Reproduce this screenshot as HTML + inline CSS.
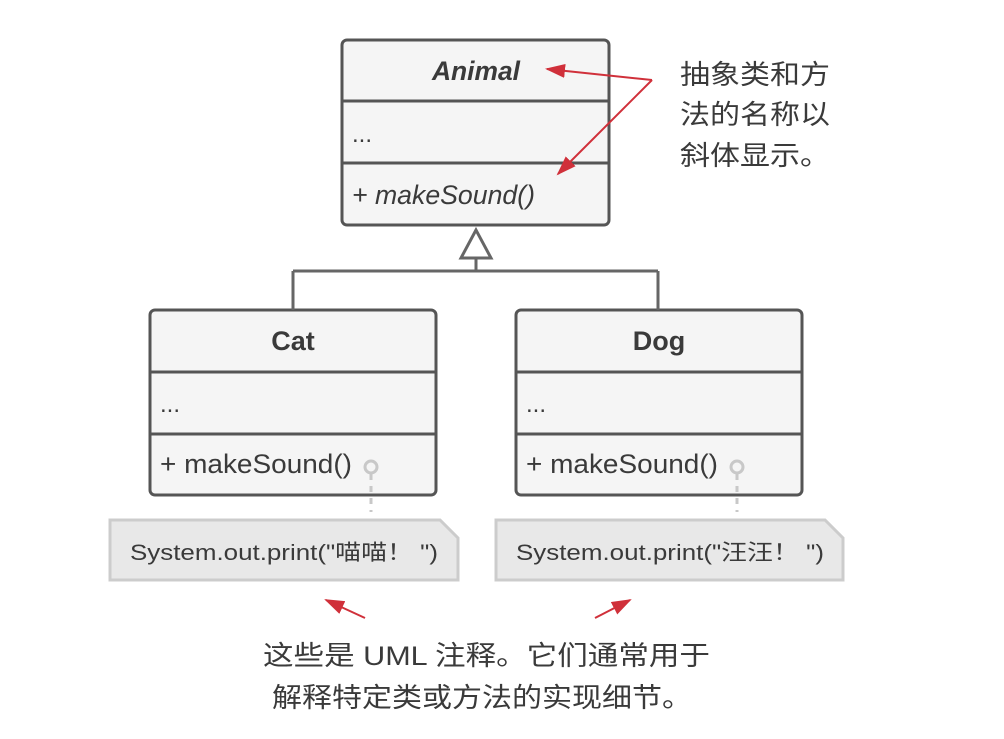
<!DOCTYPE html>
<html><head><meta charset="utf-8"><style>
body{margin:0;background:#fff;}
svg{display:block}
text{font-family:"Liberation Sans","Noto Sans CJK SC",sans-serif;fill:#3a3a3a}
</style></head><body>
<svg width="1004" height="739" viewBox="0 0 1004 739">
<defs>
<marker id="a2" markerWidth="20" markerHeight="14" refX="18" refY="7" orient="auto" markerUnits="userSpaceOnUse"><path d="M0,0 L20,7 L0,14 Z" fill="#d0303a"/></marker></defs>
<g stroke="#555" stroke-width="3" fill="#f5f5f5">
<rect x="342" y="40" width="267" height="185" rx="5"/>
<line x1="342" y1="101" x2="609" y2="101"/><line x1="342" y1="163" x2="609" y2="163"/>
<rect x="150" y="310" width="286" height="185" rx="5"/>
<line x1="150" y1="372" x2="436" y2="372"/><line x1="150" y1="434" x2="436" y2="434"/>
<rect x="516" y="310" width="286" height="185" rx="5"/>
<line x1="516" y1="372" x2="802" y2="372"/><line x1="516" y1="434" x2="802" y2="434"/>
</g>
<g stroke="#666" stroke-width="3" fill="none">
<path d="M476,258 V271 M293,271 H658 M293,271 V310 M658,271 V310"/>
<path d="M476,230 L461,258 H491 Z" fill="#fff"/>
</g>
<g fill="#e8e8e8" stroke="#ccc" stroke-width="3">
<path d="M110,520 H440 L458,538 V580 H110 Z"/>
<path d="M496,520 H825 L843,538 V580 H496 Z"/>
</g>
<g stroke="#c8c8c8" stroke-width="3" fill="none">
<circle cx="371" cy="467" r="6"/><path d="M371,474 V512" stroke-dasharray="6,6"/>
<circle cx="737" cy="467" r="6"/><path d="M737,474 V512" stroke-dasharray="6,6"/>
</g>
<g stroke="#d0303a" stroke-width="2" fill="none">
<line x1="652" y1="80" x2="547" y2="69" marker-end="url(#a2)"/>
<line x1="652" y1="80" x2="558" y2="174" marker-end="url(#a2)"/>
<line x1="365" y1="618" x2="326" y2="600" marker-end="url(#a2)"/>
<line x1="595" y1="618" x2="630" y2="600" marker-end="url(#a2)"/>
</g>
<text x="432" y="80" font-size="27" font-weight="bold" font-style="italic" textLength="88" lengthAdjust="spacingAndGlyphs">Animal</text>
<text x="352" y="142" font-size="24">...</text>
<text x="352" y="204" font-size="27" font-style="italic" textLength="183" lengthAdjust="spacingAndGlyphs">+ makeSound()</text>
<text x="293" y="350" font-size="27" font-weight="bold" text-anchor="middle">Cat</text>
<text x="160" y="412" font-size="24">...</text>
<text x="160" y="473" font-size="27" textLength="192" lengthAdjust="spacingAndGlyphs">+ makeSound()</text>
<text x="659" y="350" font-size="27" font-weight="bold" text-anchor="middle">Dog</text>
<text x="526" y="412" font-size="24">...</text>
<text x="526" y="473" font-size="27" textLength="192" lengthAdjust="spacingAndGlyphs">+ makeSound()</text>
<text x="130" y="560" font-size="22" textLength="308" lengthAdjust="spacingAndGlyphs">System.out.print("喵喵！ ")</text>
<text x="516" y="560" font-size="22" textLength="308" lengthAdjust="spacingAndGlyphs">System.out.print("汪汪！ ")</text>
<text x="680" y="84" font-size="27" textLength="150" lengthAdjust="spacingAndGlyphs">抽象类和方</text>
<text x="680" y="124" font-size="27" textLength="150" lengthAdjust="spacingAndGlyphs">法的名称以</text>
<text x="680" y="165" font-size="27" textLength="150" lengthAdjust="spacingAndGlyphs">斜体显示。</text>
<text x="263" y="665" font-size="27" textLength="447" lengthAdjust="spacingAndGlyphs">这些是 UML 注释。它们通常用于</text>
<text x="272" y="707" font-size="27" textLength="420" lengthAdjust="spacingAndGlyphs">解释特定类或方法的实现细节。</text>
</svg>
</body></html>
